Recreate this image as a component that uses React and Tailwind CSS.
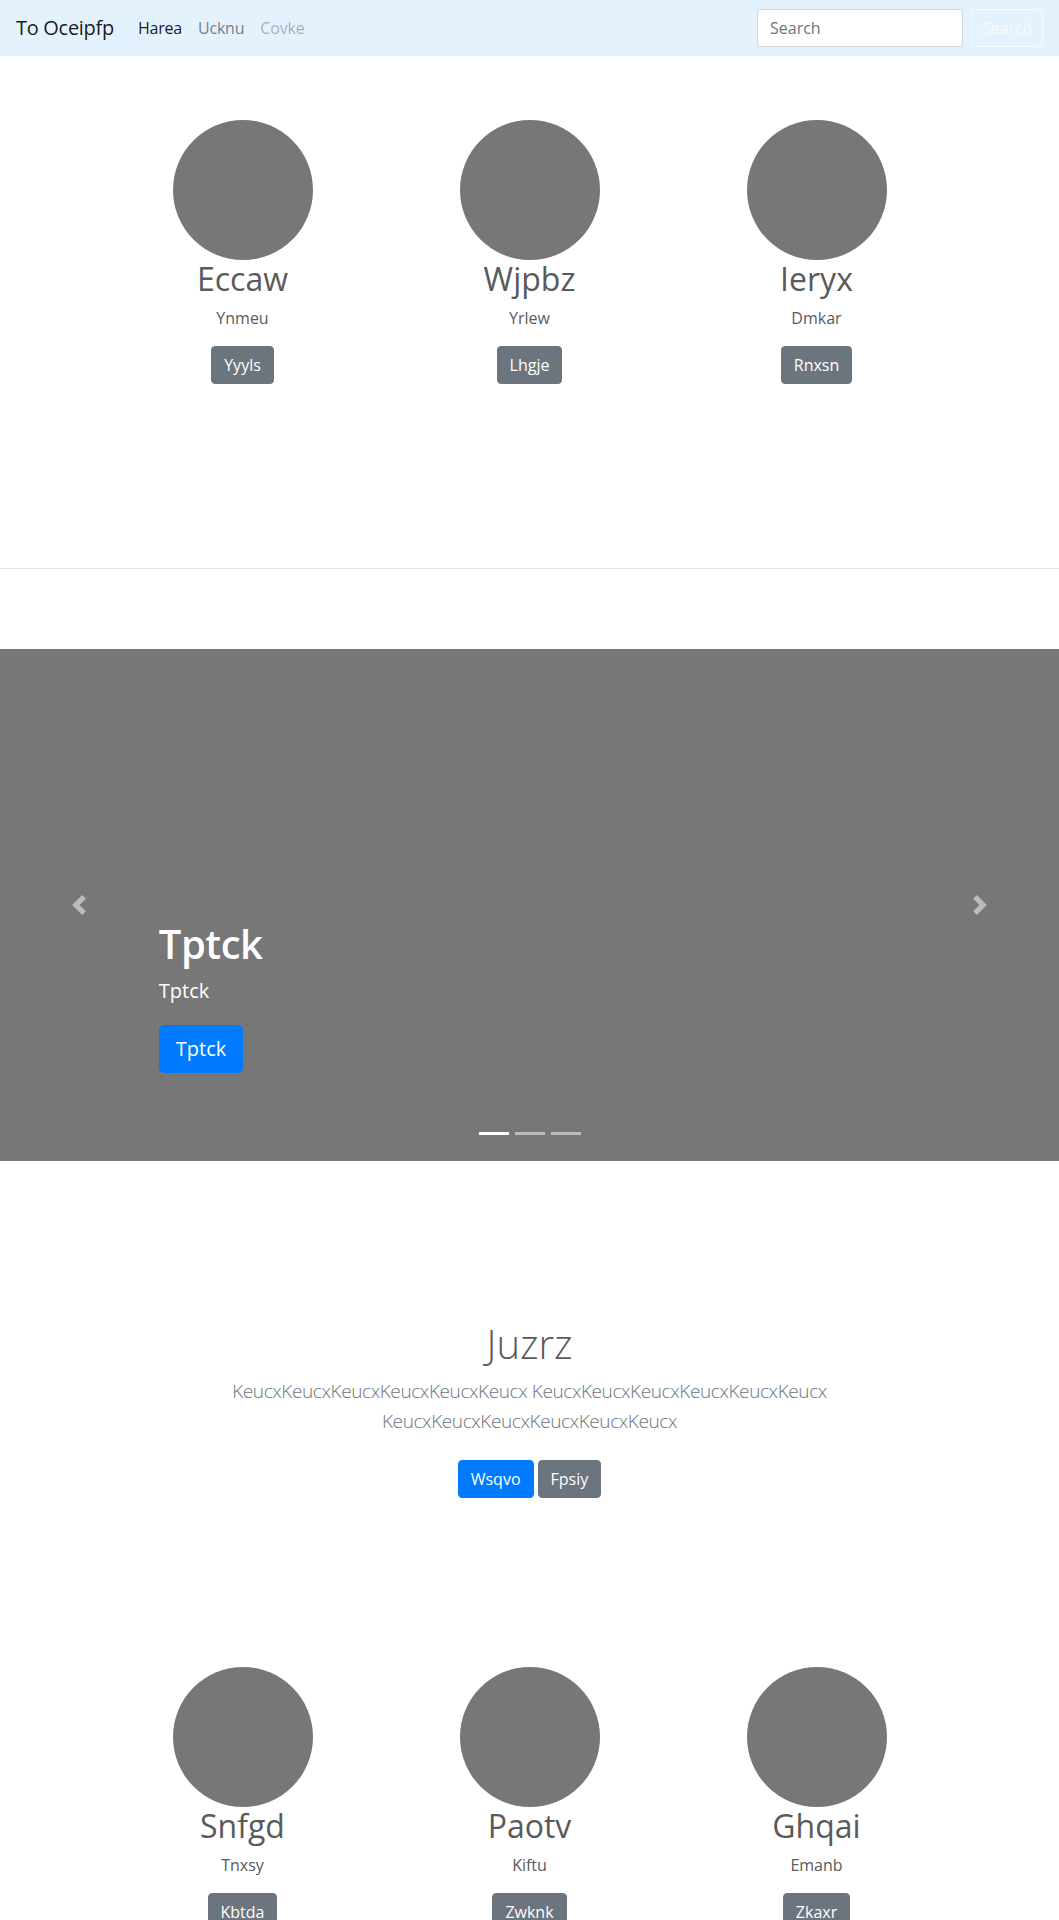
import { useState } from 'react'

const topRow = [
  { name: 'Eccaw', sub: 'Ynmeu', action: 'Yyyls' },
  { name: 'Wjpbz', sub: 'Yrlew', action: 'Lhgje' },
  { name: 'Ieryx', sub: 'Dmkar', action: 'Rnxsn' },
]

const bottomRow = [
  { name: 'Snfgd', sub: 'Tnxsy', action: 'Kbtda' },
  { name: 'Paotv', sub: 'Kiftu', action: 'Zwknk' },
  { name: 'Ghqai', sub: 'Emanb', action: 'Zkaxr' },
]

function Navbar() {
  return (
    <nav className="flex h-14 items-center bg-[#e3f2fd] px-4">
      <a className="mr-4 text-[20px] leading-[30px] tracking-[-0.3px] text-black/90">To Oceipfp</a>
      <ul className="flex items-center tracking-[-0.2px]">
        <li className="px-2 text-black/90">Harea</li>
        <li className="px-2 text-black/50">Ucknu</li>
        <li className="px-2 text-black/30">Covke</li>
      </ul>
      <form className="ml-auto flex items-center">
        <input
          type="search"
          placeholder="Search"
          className="mr-2 h-[38px] w-[206px] rounded border border-[#ced4da] bg-white px-3 text-base text-[#495057] outline-none placeholder:text-[#6c757d]"
        />
        <button
          type="button"
          className="h-[38px] w-[72px] rounded border border-[#f8f9fa] text-base text-[#f8f9fa]"
        >
          Search
        </button>
      </form>
    </nav>
  )
}

function Marketing({ items }) {
  return (
    <div className="mx-auto grid w-[861px] grid-cols-3">
      {items.map((item) => (
        <div key={item.name} className="flex flex-col items-center text-center">
          <div className="h-[140px] w-[140px] rounded-full bg-[#777]" />
          <h2 className="mb-2 text-[32px] leading-[38px] font-normal">{item.name}</h2>
          <p className="mb-4 text-base leading-6">{item.sub}</p>
          <p className="mb-4">
            <a className="inline-block rounded border border-[#6c757d] bg-[#6c757d] px-3 py-[6px] text-base leading-6 text-white">
              {item.action}
            </a>
          </p>
        </div>
      ))}
    </div>
  )
}

function Chevron({ dir }) {
  const d = dir === 'prev' ? 'M5.25 0l-4 4 4 4 1.5-1.5L4.25 4l2.5-2.5L5.25 0z' : 'M2.75 0l-1.5 1.5L3.75 4l-2.5 2.5L2.75 8l4-4-4-4z'
  return (
    <svg width="20" height="20" viewBox="0 0 8 8" fill="#fff">
      <path d={d} />
    </svg>
  )
}

function Carousel() {
  const [active] = useState(0)
  return (
    <div className="relative flex h-[512px] flex-col justify-end bg-[#777] px-[15%] pb-[88px] text-white">
      <h1 className="mb-2 text-[40px] leading-[48px] font-semibold tracking-[-0.5px]">Tptck</h1>
      <p className="mb-[19px] text-[20px] leading-[30px]">Tptck</p>
      <div>
        <a className="inline-block rounded-[5px] border border-[#007bff] bg-[#007bff] px-4 py-2 text-[20px] leading-[30px] text-white">
          Tptck
        </a>
      </div>

      <div className="absolute inset-y-0 left-0 flex w-[15%] items-center justify-center opacity-50">
        <Chevron dir="prev" />
      </div>
      <div className="absolute inset-y-0 right-0 flex w-[15%] items-center justify-center opacity-50">
        <Chevron dir="next" />
      </div>

      <ol className="absolute bottom-[26px] left-0 right-0 flex justify-center gap-[6px]">
        {[0, 1, 2].map((i) => (
          <li key={i} className={i === active ? 'h-[3px] w-[30px] bg-white' : 'h-[3px] w-[30px] bg-white/50'} />
        ))}
      </ol>
    </div>
  )
}

export default function App() {
  return (
    <div className="min-h-[1920px] bg-white font-['Open_Sans',sans-serif] text-[#5a5a5a]">
      <Navbar />

      <section className="pt-16 pb-[88px]">
        <Marketing items={topRow} />
      </section>

      <hr className="my-20 border-t border-black/10" />

      <Carousel />

      <section className="pt-[159px] text-center">
        <h1 className="mb-2 text-[40px] leading-[48px] font-light">Juzrz</h1>
        <p className="mx-auto max-w-[700px] text-[19px] leading-[30px] font-light tracking-[-0.4px] text-[#6c757d]">
          KeucxKeucxKeucxKeucxKeucxKeucx KeucxKeucxKeucxKeucxKeucxKeucx KeucxKeucxKeucxKeucxKeucxKeucx
        </p>
        <div className="mt-6 flex justify-center gap-1">
          <a className="rounded border border-[#007bff] bg-[#007bff] px-3 py-[6px] text-base leading-6 text-white">Wsqvo</a>
          <a className="rounded border border-[#6c757d] bg-[#6c757d] px-3 py-[6px] text-base leading-6 text-white">Fpsiy</a>
        </div>
      </section>

      <section className="pt-[169px]">
        <Marketing items={bottomRow} />
      </section>
    </div>
  )
}
